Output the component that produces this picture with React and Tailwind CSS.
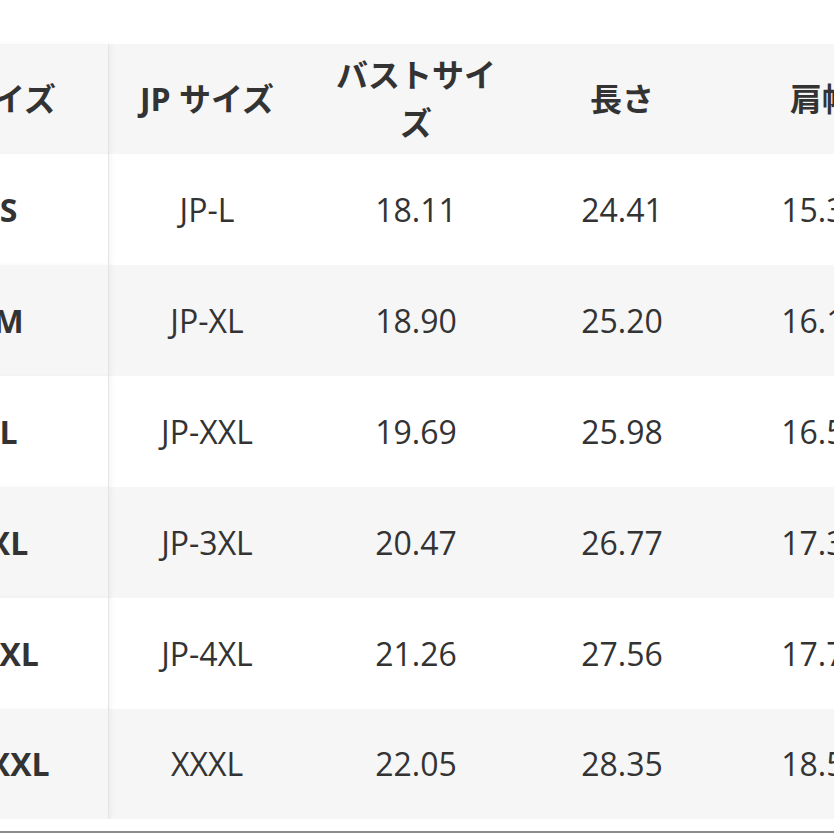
import React from "react";

const rows = [
  ["S", "JP-L", "18.11", "24.41", "15.35"],
  ["M", "JP-XL", "18.90", "25.20", "16.14"],
  ["L", "JP-XXL", "19.69", "25.98", "16.54"],
  ["XL", "JP-3XL", "20.47", "26.77", "17.32"],
  ["XXL", "JP-4XL", "21.26", "27.56", "17.72"],
  ["XXXL", "XXXL", "22.05", "28.35", "18.50"],
];

const font = { fontFamily: '"Open Sans", "Noto Sans CJK JP", sans-serif' };

function Cell({ children, first, bold, extra = "" }) {
  return (
    <div
      className={
        "flex items-center justify-center text-center px-5 leading-[48px] " +
        (first ? "border-r border-[#e4e4e4] shadow-[3px_0_4px_rgba(0,0,0,0.035)] relative z-10 " : "") +
        (bold ? "font-bold " : "font-normal ") +
        extra
      }
    >
      {children}
    </div>
  );
}

export default function App() {
  return (
    <div className="w-[834px] h-[834px] bg-white overflow-hidden text-[#333333] text-[32px]" style={font}>
      <div className="pt-[44px] overflow-hidden">
        <div className="ml-[-91px] w-[1018px] grid grid-cols-[200px_196px_222px_190px_210px]">
          <div className="contents">
            <Cell first bold extra="h-[110px] bg-[#f6f6f6]">サイズ</Cell>
            <Cell bold extra="h-[110px] bg-[#f6f6f6]">JP サイズ</Cell>
            <Cell bold extra="h-[110px] bg-[#f6f6f6]">バストサイズ</Cell>
            <Cell bold extra="h-[110px] bg-[#f6f6f6]">長さ</Cell>
            <Cell bold extra="h-[110px] bg-[#f6f6f6]">肩幅</Cell>
          </div>
          {rows.map((r, i) => {
            const bg = i % 2 === 1 ? "bg-[#f6f6f6]" : "bg-white";
            const h = i === rows.length - 1 ? "h-[110px]" : "h-[111px]";
            return (
              <div className="contents" key={i}>
                {r.map((c, j) => (
                  <Cell key={j} first={j === 0} bold={j === 0} extra={`${h} ${bg}`}>
                    {c}
                  </Cell>
                ))}
              </div>
            );
          })}
        </div>
      </div>
      <div className="mt-[12px] h-[2px] bg-[#8c8c8c]" />
    </div>
  );
}
